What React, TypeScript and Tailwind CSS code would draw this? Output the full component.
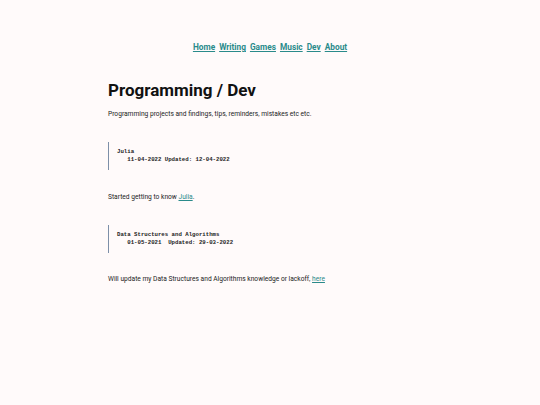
import React from "react";

const NAV = ["Home", "Writing", "Games", "Music", "Dev", "About"];

function Entry({ title, dates }: { title: string; dates: string }) {
  return (
    <div className="border-l border-[#7d8fa8] pl-[8px] py-[6px]">
      <pre className="font-['Liberation_Mono',monospace] font-bold text-[5.7px] leading-[8px] text-[#222]">
        {title}
        {"\n"}
        {dates}
      </pre>
    </div>
  );
}

export default function App() {
  return (
    <div className="min-h-[405px] w-full bg-[#fffafa] font-['Roboto',sans-serif] text-[#111]">
      <nav className="flex justify-center gap-[4px] pt-[41px] text-[8.3px] font-bold">
        {NAV.map((n) => (
          <a key={n} href="#" className="text-[#2a8a8a] underline">
            {n}
          </a>
        ))}
      </nav>
      <main className="ml-[108px] w-[324px]">
        <h1 className="mt-[26px] text-[17px] leading-[22px] font-bold">Programming / Dev</h1>
        <p className="mt-[8px] text-[6.65px] leading-[10px] text-[#222]">
          Programming projects and findings, tips, reminders, mistakes etc etc.
        </p>
        <div className="mt-[23px]">
          <Entry title="Julia" dates="   11-04-2022 Updated: 12-04-2022" />
        </div>
        <p className="mt-[22px] text-[6.65px] leading-[10px] text-[#222]">
          Started getting to know{" "}
          <a href="#" className="text-[#2a8a8a] underline">
            Julia
          </a>
          .
        </p>
        <div className="mt-[23px]">
          <Entry title="Data Structures and Algorithms" dates="   01-05-2021  Updated: 29-03-2022" />
        </div>
        <p className="mt-[21px] text-[6.65px] leading-[10px] text-[#222]">
          Will update my Data Structures and Algorithms knowledge or lackoff,{" "}
          <a href="#" className="text-[#2a8a8a] underline">
            here
          </a>
        </p>
      </main>
    </div>
  );
}
